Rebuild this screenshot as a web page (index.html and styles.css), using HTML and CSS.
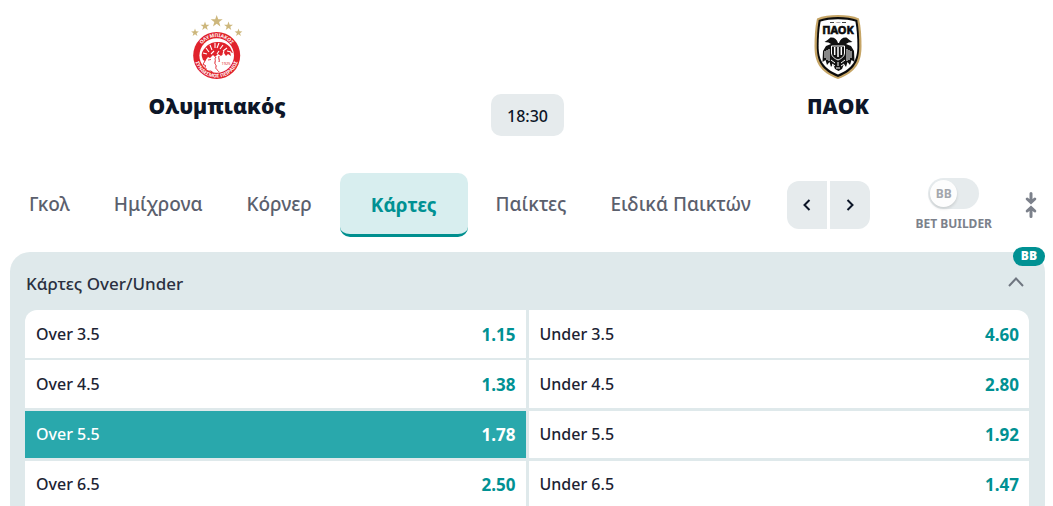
FILE: index.html
```html
<!DOCTYPE html>
<html lang="el">
<head>
    <meta charset="UTF-8">
    <meta name="viewport" content="width=device-width, initial-scale=1.0">
    <title>Ολυμπιακός - ΠΑΟΚ</title>
    <link rel="stylesheet" href="styles.css">
</head>
<body>
    <header class="match">
        <div class="team">
            <svg class="crest" viewBox="0 0 64 68" aria-hidden="true">
                <defs>
                    <path id="ring-top" d="M13.200 42.500a18.500 18.500 0 0 1 37 0"/>
                    <path id="ring-bottom" d="M9.700 42.500a22 22 0 0 0 44 0"/>
                    <path id="star" d="M0-6l1.500 4.200 4.500.1-3.600 2.700L3.700 5.400 0 2.800l-3.700 2.600L-2.400 1-6-1.700l4.500-.1z"/>
                </defs>
                <g fill="#cdb77c">
                    <use href="#star" transform="translate(31.700 8)"/>
                    <use href="#star" transform="translate(20 13) scale(.75)"/>
                    <use href="#star" transform="translate(43.500 13) scale(.75)"/>
                    <use href="#star" transform="translate(10 19.500) scale(.65)"/>
                    <use href="#star" transform="translate(53.500 19.500) scale(.65)"/>
                </g>
                <circle cx="31.700" cy="42.500" r="23.500" fill="#e0222b"/>
                <circle cx="31.700" cy="42.500" r="17.300" fill="#fff"/>
                <g class="ring-text">
                    <text><textPath href="#ring-top" startOffset="50%">ΟΛΥΜΠΙΑΚΟΣ</textPath></text>
                    <text><textPath href="#ring-bottom" startOffset="50%">ΣΥΝΔΕΣΜΟΣ ΠΕΙΡΑΙΩΣ</textPath></text>
                </g>
                <path d="M17 44c-1-4 1-7 3-9 2-3 7-6 12-6 5-.5 10 1.500 13 5l3 6-3-1 1 4-3-2-2 2-2-3-3 3-3-2-3 3-2-2-3 3-2-1-3 4-2-1z" fill="#e0222b"/>
                <path d="M18 40l4 1m-1-6l3 4m1-7l2 5m3-7l0 5m4-5l-2 5m6-3l-3 4m7-1l-4 3m8 1l-4-1M26 41l3-3m3 3l2-3m4 3l1-3" stroke="#fff" stroke-width="1.100"/>
                <path d="M20.500 46c0 2-2 4-2.500 5.500l2.500 1-.5 2 1 1-.5 1.500c1 2 4 1 5.500 1l2.500 2M31 44c-2 2 0 3-1 5s2 3 1 5 2 3 3 5M34 43c-1 2 1 4 0 6" stroke="#e0222b" stroke-width="1"/>
                <path d="M23 47l3-.5" stroke="#e0222b" stroke-width=".8"/>
                <text class="crest-year" x="36.500" y="51.500">1925</text>
            </svg>
            <h2 class="team-name">Ολυμπιακός</h2>
        </div>
        <div class="kickoff"><time class="kickoff-time">18:30</time></div>
        <div class="team">
            <svg class="crest" viewBox="0 0 64 68" aria-hidden="true">
                <path d="M32 2c8 0 15 1 21 3.400C55 14 55.500 24 55.500 33c0 16-5 26-23.500 33C13.500 59 8.500 49 8.500 33c0-9 .5-19 2.500-27.600C17 3 24 2 32 2z" fill="#c6a566"/>
                <path d="M32 4c7.500 0 14 1 19.300 3C52.700 15 53.200 24 53.200 33c0 15-4.400 24.300-21.200 31C15.200 57.300 10.800 48 10.800 33c0-9 .5-18 1.900-26C18 5 24.500 4 32 4z" fill="#0b0b0b"/>
                <path d="M32 6.200c6.500 0 12.500.8 17.400 2.400C50.900 16.500 51.400 25 51.400 33c0 13.500-4 22-19.400 28.600C16.600 55 12.600 46.500 12.600 33c0-8 .5-16.500 2-24.400C19.500 7 25.500 6.200 32 6.200z" fill="#fff"/>
                <path d="M24 9.500h4m8 0h4" stroke="#111" stroke-width=".8"/>
                <text class="paok-year" x="32" y="10.200">1926</text>
                <text class="paok-name" x="32" y="21.200">ΠΑΟΚ</text>
                <path d="M32 30c-1-4-4-6-7.500-5.500L21.500 27l-3 2 4 .5L25 31l-5 2-3 5-.5 11 3-2 1.500 5 2.500-3 1.500 5 2-3 2 5 3.500 2 3.500-2 2-5 2 3 1.500-5 2.500 3 1.500-5 3 2-.5-11-3-5-5-2 2.500-1.500 4-.5-3-2-3-2.500c-3.500-.5-6.500 1.500-7.500 5.500z" fill="#111"/>
                <path d="M25.500 33h13v7c0 3.500-3 5.500-6.500 7-3.500-1.500-6.500-3.500-6.500-7z" fill="#111" stroke="#fff" stroke-width="1"/>
                <path d="M28.700 34v8m3.300-8v10m3.300-10v8" stroke="#fff" stroke-width="1.500"/>
                <path d="M19 38v7m2-8v10m2-11v12m22-10v7m-2-8v10m-2-11v12M25 47l4 3m10-3l-4 3m-9 1l3 2m9-2l-3 2m-3-4v4m-2 2h4" stroke="#fff" stroke-width="1"/>
            </svg>
            <h2 class="team-name">ΠΑΟΚ</h2>
        </div>
    </header>

    <main class="markets">
        <div class="toolbar">
            <nav class="tabs">
                <button type="button" class="tab">Γκολ</button>
                <button type="button" class="tab">Ημίχρονα</button>
                <button type="button" class="tab">Κόρνερ</button>
                <button type="button" class="tab tab-active">Κάρτες</button>
                <button type="button" class="tab">Παίκτες</button>
                <button type="button" class="tab">Ειδικά Παικτών</button>
            </nav>
            <div class="pager">
                <button type="button" class="pager-btn" aria-label="Προηγούμενα">
                    <svg width="12" height="14" viewBox="0 0 12 14"><path d="M8.500 2L3.500 7l5 5"/></svg>
                </button>
                <button type="button" class="pager-btn" aria-label="Επόμενα">
                    <svg width="12" height="14" viewBox="0 0 12 14"><path d="M3.500 2l5 5-5 5"/></svg>
                </button>
            </div>
            <label class="builder">
                <input type="checkbox" class="builder-input">
                <span class="switch"><span class="knob">BB</span></span>
                <span class="builder-label">BET BUILDER</span>
            </label>
            <button type="button" class="collapse" aria-label="Σύμπτυξη όλων">
                <svg width="12" height="26" viewBox="0 0 12 26"><path d="M6 1.500v8M2.200 7L6 10.500 9.800 7M6 24.500v-8M2.200 19L6 15.500 9.800 19"/></svg>
            </button>
        </div>

        <section class="panel">
            <span class="badge">BB</span>
            <div class="panel-head">
                <h3 class="panel-title">Κάρτες Over/Under</h3>
                <button type="button" class="panel-toggle" aria-label="Κλείσιμο">
                    <svg width="18" height="12" viewBox="0 0 18 12"><path d="M2 9l7-7.500L16 9"/></svg>
                </button>
            </div>
            <div class="odds">
                <button type="button" class="odd"><span>Over 3.5</span><b class="price">1.15</b></button>
                <button type="button" class="odd"><span>Under 3.5</span><b class="price">4.60</b></button>
                <button type="button" class="odd"><span>Over 4.5</span><b class="price">1.38</b></button>
                <button type="button" class="odd"><span>Under 4.5</span><b class="price">2.80</b></button>
                <button type="button" class="odd odd-selected"><span>Over 5.5</span><b class="price">1.78</b></button>
                <button type="button" class="odd"><span>Under 5.5</span><b class="price">1.92</b></button>
                <button type="button" class="odd"><span>Over 6.5</span><b class="price">2.50</b></button>
                <button type="button" class="odd"><span>Under 6.5</span><b class="price">1.47</b></button>
            </div>
        </section>
    </main>
</body>
</html>
```
FILE: styles.css
```css
* {
    box-sizing: border-box;
}
body {
    margin: 0;
    padding: 0 8px 0 10px;
    background-color: #fff;
    color: #0d1628;
    font-family: "Noto Sans", sans-serif;
    font-size: 16px;
}
button {
    margin: 0;
    padding: 0;
    border: none;
    background: none;
    color: inherit;
    font: inherit;
    cursor: pointer;
}
svg {
    display: block;
    fill: none;
}

/* match header */
.match {
    display: grid;
    grid-template-columns: 2fr 1fr 2fr;
    padding: 13px 0 37px;
}
.team {
    display: flex;
    flex-direction: column;
    align-items: center;
}
.crest {
    width: 64px;
    height: 68px;
}
.team-name {
    margin: 10px 0 15px;
    font-family: "Open Sans", "Noto Sans", sans-serif;
    font-size: 21px;
    font-weight: 800;
    line-height: 30px;
}
.kickoff {
    display: flex;
    justify-content: center;
    align-items: flex-end;
}
.kickoff-time {
    padding: 11px 16px 9px;
    border-radius: 10px;
    background-color: #e6ebed;
    font-weight: 500;
    line-height: 22px;
}
.ring-text {
    fill: #fff;
    font-size: 5px;
    font-weight: 700;
    text-anchor: middle;
}
.crest-year {
    fill: #e0222b;
    font-size: 4px;
}
.paok-year {
    fill: #111;
    font-size: 2px;
    text-anchor: middle;
}
.paok-name {
    fill: #0b0b0b;
    stroke: #0b0b0b;
    stroke-width: 0.6px;
    font-size: 11px;
    font-weight: 700;
    text-anchor: middle;
}

/* tabs row */
.toolbar {
    display: flex;
    align-items: center;
    padding-bottom: 15px;
}
.tabs {
    display: flex;
    flex: 1;
    min-width: 0;
    overflow: hidden;
}
.tab {
    height: 64px;
    padding: 0 22px 2px;
    color: #5b606d;
    font-size: 19px;
    font-weight: 500;
    white-space: nowrap;
}
.tab:first-child {
    padding-left: 19px;
}
.tab-active {
    margin: 0 6px;
    padding: 3px 31px 0;
    border-bottom: 3px solid #008f8f;
    border-radius: 10px;
    background-color: #d8eeef;
    color: #009193;
    font-weight: 700;
}
.pager {
    display: flex;
    gap: 3px;
    border-radius: 12px;
    overflow: hidden;
}
.pager-btn {
    display: flex;
    justify-content: center;
    align-items: center;
    width: 40px;
    height: 48px;
    background-color: #e6ebed;
}
.pager-btn svg {
    stroke: #0d1628;
    stroke-width: 2;
}
.builder {
    display: flex;
    flex-direction: column;
    align-items: center;
    gap: 7px;
    margin: 0 33px 0 45px;
    cursor: pointer;
}
.builder-input {
    position: absolute;
    opacity: 0;
}
.switch {
    display: flex;
    width: 51px;
    height: 31px;
    padding: 2px;
    border-radius: 16px;
    background-color: #e6ebed;
}
.knob {
    width: 27px;
    height: 27px;
    border-radius: 50%;
    background-color: #fdfdfd;
    box-shadow: 0 2px 3px rgba(0, 0, 0, 0.12);
    color: #a3a7ad;
    font-size: 12px;
    font-weight: 700;
    line-height: 27px;
    text-align: center;
}
.builder-input:checked + .switch {
    justify-content: flex-end;
}
.builder-label {
    color: #7c818b;
    font-size: 12px;
    font-weight: 700;
    line-height: 16px;
}
.collapse {
    margin-right: 8px;
}
.collapse svg {
    stroke: #7c818b;
    stroke-width: 3;
    stroke-linecap: round;
}

/* market panel */
.panel {
    position: relative;
    padding: 0 16px 16px 15px;
    border-radius: 20px;
    background-color: #dfe9eb;
}
.badge {
    position: absolute;
    top: -5px;
    right: 0;
    padding: 0 8px 1px;
    border-radius: 10px;
    background-color: #009193;
    color: #fff;
    font-family: "Open Sans", sans-serif;
    font-size: 12px;
    font-weight: 800;
    line-height: 18px;
}
.panel-head {
    display: flex;
    justify-content: space-between;
    align-items: center;
    height: 58px;
    padding: 4px 4px 0 1px;
}
.panel-title {
    margin: 0;
    color: #2a3040;
    font-size: 17px;
    font-weight: 500;
}
.panel-toggle svg {
    stroke: #6f7680;
    stroke-width: 2;
}
.odds {
    display: grid;
    grid-template-columns: 1fr 1fr;
    gap: 2px 3px;
    border-radius: 12px 12px 0 0;
    overflow: hidden;
}
.odd {
    display: flex;
    justify-content: space-between;
    align-items: center;
    height: 48px;
    padding: 0 10px 0 11px;
    background-color: #fff;
    color: #1c2333;
    font-weight: 500;
}
.odd:nth-child(n+5) {
    padding-bottom: 1px;
    border-top: 1px solid #dfe9eb;
}
.price {
    color: #009193;
    font-size: 17px;
    font-weight: 700;
}
.odd-selected,
.odd-selected .price {
    color: #fff;
}
.odd-selected {
    background-color: #29a8ac;
}
```
